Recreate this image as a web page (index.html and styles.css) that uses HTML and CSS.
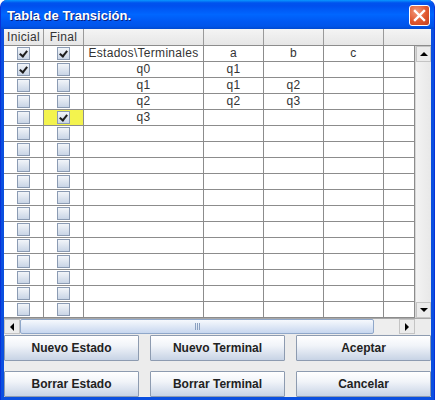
FILE: index.html
```html
<!DOCTYPE html>
<html>
<head>
<meta charset="utf-8">
<link rel="stylesheet" href="styles.css">
</head>
<body>
<div class="window">
  <div class="titlebar">
    <span class="title">Tabla de Transición.</span>
    <span class="close"><svg width="13" height="13" viewBox="0 0 13 13"><path d="M2 2 L11 11 M11 2 L2 11" stroke="#fff" stroke-width="2.4" stroke-linecap="square"/></svg></span>
  </div>
  <div class="body">
    <div class="thead">
      <div class="th">Inicial</div>
      <div class="th">Final</div>
      <div class="th"></div>
      <div class="th"></div>
      <div class="th"></div>
      <div class="th"></div>
      <div class="th last"></div>
    </div>
    <div class="mid">
      <div class="table">
        <div class="td cbcell"><span class="cb on"></span></div><div class="td cbcell"><span class="cb on"></span></div><div class="td">Estados\Terminales</div><div class="td">a</div><div class="td">b</div><div class="td">c</div><div class="td"></div>
        <div class="td cbcell"><span class="cb on"></span></div><div class="td cbcell"><span class="cb"></span></div><div class="td">q0</div><div class="td">q1</div><div class="td"></div><div class="td"></div><div class="td"></div>
        <div class="td cbcell"><span class="cb"></span></div><div class="td cbcell"><span class="cb"></span></div><div class="td">q1</div><div class="td">q1</div><div class="td">q2</div><div class="td"></div><div class="td"></div>
        <div class="td cbcell"><span class="cb"></span></div><div class="td cbcell"><span class="cb"></span></div><div class="td">q2</div><div class="td">q2</div><div class="td">q3</div><div class="td"></div><div class="td"></div>
        <div class="td cbcell"><span class="cb"></span></div><div class="td cbcell focus"><span class="cb on"></span></div><div class="td">q3</div><div class="td"></div><div class="td"></div><div class="td"></div><div class="td"></div>
        <div class="td cbcell"><span class="cb"></span></div><div class="td cbcell"><span class="cb"></span></div><div class="td"></div><div class="td"></div><div class="td"></div><div class="td"></div><div class="td"></div>
        <div class="td cbcell"><span class="cb"></span></div><div class="td cbcell"><span class="cb"></span></div><div class="td"></div><div class="td"></div><div class="td"></div><div class="td"></div><div class="td"></div>
        <div class="td cbcell"><span class="cb"></span></div><div class="td cbcell"><span class="cb"></span></div><div class="td"></div><div class="td"></div><div class="td"></div><div class="td"></div><div class="td"></div>
        <div class="td cbcell"><span class="cb"></span></div><div class="td cbcell"><span class="cb"></span></div><div class="td"></div><div class="td"></div><div class="td"></div><div class="td"></div><div class="td"></div>
        <div class="td cbcell"><span class="cb"></span></div><div class="td cbcell"><span class="cb"></span></div><div class="td"></div><div class="td"></div><div class="td"></div><div class="td"></div><div class="td"></div>
        <div class="td cbcell"><span class="cb"></span></div><div class="td cbcell"><span class="cb"></span></div><div class="td"></div><div class="td"></div><div class="td"></div><div class="td"></div><div class="td"></div>
        <div class="td cbcell"><span class="cb"></span></div><div class="td cbcell"><span class="cb"></span></div><div class="td"></div><div class="td"></div><div class="td"></div><div class="td"></div><div class="td"></div>
        <div class="td cbcell"><span class="cb"></span></div><div class="td cbcell"><span class="cb"></span></div><div class="td"></div><div class="td"></div><div class="td"></div><div class="td"></div><div class="td"></div>
        <div class="td cbcell"><span class="cb"></span></div><div class="td cbcell"><span class="cb"></span></div><div class="td"></div><div class="td"></div><div class="td"></div><div class="td"></div><div class="td"></div>
        <div class="td cbcell"><span class="cb"></span></div><div class="td cbcell"><span class="cb"></span></div><div class="td"></div><div class="td"></div><div class="td"></div><div class="td"></div><div class="td"></div>
        <div class="td cbcell"><span class="cb"></span></div><div class="td cbcell"><span class="cb"></span></div><div class="td"></div><div class="td"></div><div class="td"></div><div class="td"></div><div class="td"></div>
        <div class="td cbcell"><span class="cb"></span></div><div class="td cbcell"><span class="cb"></span></div><div class="td"></div><div class="td"></div><div class="td"></div><div class="td"></div><div class="td"></div>
      </div>
      <div class="vscroll">
        <div class="sbtn"><span class="tri up"></span></div>
        <div class="vtrack"></div>
        <div class="sbtn"><span class="tri down"></span></div>
      </div>
    </div>
    <div class="hscroll">
      <div class="sbtn"><span class="tri left"></span></div>
      <div class="thumb"><span class="grip"></span></div>
      <div class="htrack"></div>
      <div class="sbtn"><span class="tri right"></span></div>
      <div class="corner"></div>
    </div>
    <div class="buttons">
      <button class="btn">Nuevo Estado</button>
      <button class="btn">Nuevo Terminal</button>
      <button class="btn">Aceptar</button>
      <button class="btn">Borrar Estado</button>
      <button class="btn">Borrar Terminal</button>
      <button class="btn">Cancelar</button>
    </div>
  </div>
</div>
</body>
</html>
```
FILE: styles.css
```css
* { box-sizing: border-box; }
html, body { margin: 0; padding: 0; }
body { width: 435px; height: 400px; overflow: hidden; background: #fff; }

.window {
  width: 435px; height: 400px;
  display: flex; flex-direction: column;
  background: #0a4fe0;
  border-radius: 7px 7px 0 0;
  border-left: 1px solid #0831d9;
  border-right: 1px solid #0831d9;
  overflow: hidden;
}
.titlebar {
  height: 29px; flex: none;
  display: flex; align-items: center; justify-content: space-between;
  padding: 0 4px 0 6px;
  background: linear-gradient(to bottom, #0997ff 0%, #0053ee 10%, #0050ee 20%, #0066ff 50%, #0058f2 75%, #0055ea 90%, #0049d0 100%);
}
.title {
  color: #fff; font: bold 13px "Liberation Sans", Arial, sans-serif;
  text-shadow: 1px 1px 0 #0a1e7a;
  margin-top: 1px;
}
.close {
  width: 21px; height: 21px;
  border: 1px solid #fff; border-radius: 3px;
  background: radial-gradient(circle at 35% 30%, #f39a7c 0%, #e0582f 55%, #c2401f 100%);
  display: flex; align-items: center; justify-content: center;
  margin-top: 2px;
}
.body {
  flex: 1;
  margin: 0 3px 3px;
  background: #ececec;
  display: flex; flex-direction: column;
}
.thead {
  height: 17px; flex: none;
  display: grid;
  grid-template-columns: 40px 40px 120px 60px 60px 60px 47px;
  background: linear-gradient(to bottom, #f4f4f4, #e6e6e6);
  border-bottom: 1px solid #8c8c8c;
}
.th {
  border-right: 1px solid #9a9a9a;
  font: 12px "Liberation Sans", Arial, sans-serif;
  letter-spacing: 0.3px;
  color: #333;
  text-align: center; line-height: 16px;
}
.th.last { border-right: none; }
.mid { display: flex; height: 272px; flex: none; }
.table {
  width: 411px;
  display: grid;
  grid-template-columns: 40px 40px 120px 60px 60px 60px 31px;
  grid-auto-rows: 16px;
  background: #fff;
}
.td {
  border-right: 1px solid #8c8c8c;
  border-bottom: 1px solid #8c8c8c;
  font: 12px "Liberation Sans", Arial, sans-serif;
  letter-spacing: 0.3px;
  color: #333;
  text-align: center; line-height: 15px;
  overflow: hidden; white-space: nowrap;
}
.cbcell { display: flex; align-items: center; justify-content: center; }
.cbcell.focus { background: #f3f34e; }
.cb {
  width: 13px; height: 13px;
  border: 1px solid #8b9bb3;
  background: linear-gradient(to bottom, #f2f5f9, #c9d5e6);
  position: relative;
}
.cb.on::after {
  content: "";
  position: absolute;
  left: 3px; top: 1px;
  width: 3px; height: 6px;
  border-right: 2px solid #1e1e1e;
  border-bottom: 2px solid #1e1e1e;
  transform: rotate(38deg);
}
.vscroll {
  width: 16px;
  display: flex; flex-direction: column;
  background: #eeeeee;
  border-left: 1px solid #d6d6d6;
}
.vtrack { flex: 1; background: linear-gradient(to right, #f3f3f3, #e8e8e8); }
.sbtn {
  width: 16px; height: 16px; flex: none;
  display: flex; align-items: center; justify-content: center;
  background: #ececec;
  border: 1px solid #c4c4c4;
}
.vscroll .sbtn { width: 15px; }
.tri { width: 0; height: 0; }
.tri.up { border-left: 4px solid transparent; border-right: 4px solid transparent; border-bottom: 4px solid #000; }
.tri.down { border-left: 4px solid transparent; border-right: 4px solid transparent; border-top: 4px solid #000; }
.tri.left { border-top: 4px solid transparent; border-bottom: 4px solid transparent; border-right: 4px solid #000; }
.tri.right { border-top: 4px solid transparent; border-bottom: 4px solid transparent; border-left: 4px solid #000; }
.hscroll {
  height: 16px; flex: none;
  display: flex;
  background: #eeeeee;
  border-top: 1px solid #a8a8a8;
}
.hscroll .sbtn { height: 15px; }
.thumb {
  width: 354px;
  border: 1px solid #8fa7c9;
  border-radius: 2px;
  background: linear-gradient(to bottom, #f6f9fd, #c8d7ef);
  display: flex; align-items: center; justify-content: center;
}
.grip {
  width: 5px; height: 7px;
  border-left: 1px solid #8aa0c0;
  border-right: 1px solid #8aa0c0;
  position: relative;
}
.grip::after {
  content: ""; position: absolute; left: 1px; top: 0;
  width: 1px; height: 7px; background: #8aa0c0;
}
.htrack { width: 25px; background: #eeeeee; }
.corner { flex: 1; background: #ececec; }
.buttons {
  margin-top: 1px;
  display: grid;
  grid-template-columns: repeat(3, 1fr);
  grid-auto-rows: 26px;
  column-gap: 11px; row-gap: 10px;
}
.btn {
  margin: 0;
  border: 1px solid #8d9bb0;
  border-radius: 1px;
  background: linear-gradient(to bottom, #ffffff 0%, #f1f4f9 40%, #c7d3e5 100%);
  font: bold 12px "Liberation Sans", Arial, sans-serif;
  color: #222;
  padding: 0;
}
```
